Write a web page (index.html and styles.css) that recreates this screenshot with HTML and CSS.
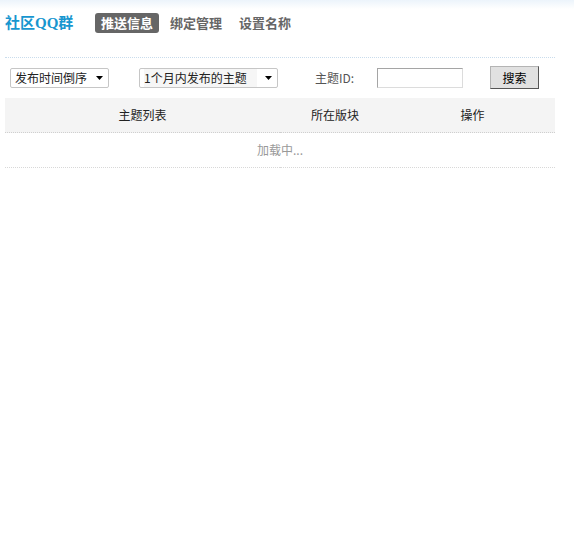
FILE: index.html
```html
<!DOCTYPE html>
<html lang="zh-CN">
<head>
<meta charset="utf-8">
<title>社区QQ群</title>
<link rel="stylesheet" href="styles.css">
</head>
<body>
<div class="page">
  <div class="topbar">
    <h1 class="logo">社区QQ群</h1>
    <nav class="tabs">
      <a class="tab active">推送信息</a>
      <a class="tab">绑定管理</a>
      <a class="tab">设置名称</a>
    </nav>
  </div>
  <div class="toolbar">
    <div class="select sel-order">
      <span class="sel-text">发布时间倒序</span>
      <svg class="sel-arrow" width="7" height="4" viewBox="0 0 7 4"><path d="M0 0H7L3.5 4Z" fill="#000"/></svg>
    </div>
    <div class="select sel-range">
      <span class="sel-text hl">1个月内发布的主题</span>
      <svg class="sel-arrow" width="7" height="4" viewBox="0 0 7 4"><path d="M0 0H7L3.5 4Z" fill="#000"/></svg>
    </div>
    <label class="id-label">主题ID:</label>
    <input class="id-input" type="text">
    <button class="btn">搜索</button>
  </div>
  <table class="list">
    <thead>
      <tr><th class="c1">主题列表</th><th class="c2">所在版块</th><th class="c3">操作</th></tr>
    </thead>
    <tbody>
      <tr><td colspan="3" class="loading">加载中...</td></tr>
    </tbody>
  </table>
</div>
</body>
</html>
```
FILE: styles.css
```css
html, body {
  margin: 0;
  padding: 0;
}
body {
  background: linear-gradient(to bottom, #ecf4fb 0, #ffffff 9px) no-repeat #fff;
  font-family: "Noto Sans CJK SC", "Liberation Sans", sans-serif;
  font-size: 12px;
  color: #333;
}
.page {
  width: 550px;
  margin-left: 5px;
}
.topbar {
  display: flex;
  align-items: center;
  height: 20px;
  padding: 13px 0 24px;
  border-bottom: 1px dotted #c9dcec;
}
.logo {
  width: 90px;
  margin: 0;
  font-family: "Liberation Serif", "Noto Sans CJK SC", serif;
  font-size: 15px;
  font-weight: bold;
  color: #1796cf;
  line-height: 20px;
}
.tabs {
  display: flex;
  gap: 5px;
}
.tab {
  display: block;
  height: 20px;
  line-height: 20px;
  padding: 0 6px;
  border-radius: 3px;
  font-size: 13px;
  font-weight: bold;
  color: #666;
  cursor: pointer;
}
.tab.active {
  background: #666;
  color: #fff;
}
.toolbar {
  display: flex;
  align-items: center;
  height: 23px;
  padding: 8px 0 9px 5px;
}
.select {
  box-sizing: border-box;
  display: flex;
  align-items: center;
  justify-content: space-between;
  height: 20px;
  padding: 0 5px 0 4px;
  border: 1px solid #c6c6c6;
  border-radius: 2px;
  background: #fff;
  color: #222;
}
.sel-order {
  width: 99px;
}
.sel-range {
  width: 139px;
  margin-left: 30px;
}
.sel-text {
  line-height: 18px;
}
.sel-text.hl {
  background: #f6f6f6;
  padding-right: 10px;
}
.sel-arrow {
  display: block;
}
.id-label {
  margin-left: 37px;
  color: #555;
}
.id-input {
  box-sizing: border-box;
  width: 86px;
  height: 20px;
  margin: 0 0 0 23px;
  padding: 0 3px;
  border: 1px solid #a5a5a5;
  border-right-color: #dcdcdc;
  border-bottom-color: #dcdcdc;
  background: #fff;
  font-size: 12px;
}
.btn {
  box-sizing: border-box;
  width: 49px;
  height: 23px;
  margin-left: 27px;
  padding: 0;
  border: 1px solid #b4b4b4;
  border-right-color: #555;
  border-bottom-color: #555;
  background: #e1e1e1;
  font-family: "Noto Sans CJK SC", sans-serif;
  font-size: 12px;
  color: #000;
}
.list {
  width: 550px;
  border-collapse: collapse;
  table-layout: fixed;
}
.list th {
  height: 32px;
  padding: 0 0 2px;
  background: #f4f4f4;
  font-weight: normal;
  color: #222;
  text-align: center;
  border-bottom: 1px dotted #cfcfcf;
}
.list th.c1 { width: 275px; }
.list th.c2 { width: 110px; }
.list th.c3 { width: 165px; }
.list td {
  height: 33px;
  padding: 0 0 1px;
  text-align: center;
  border-bottom: 1px dotted #d8d8d8;
}
.loading {
  color: #999;
}
```
